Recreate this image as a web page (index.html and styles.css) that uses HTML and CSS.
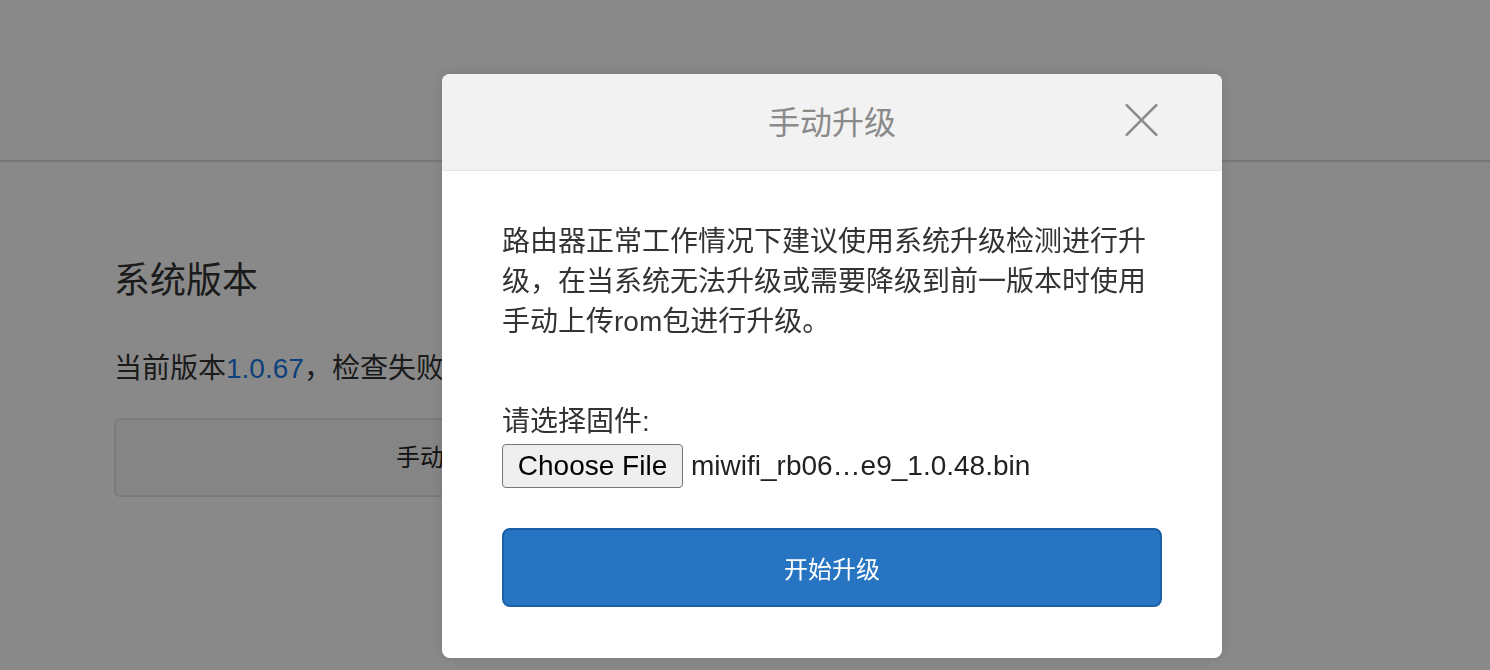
FILE: index.html
```html
<!DOCTYPE html>
<html lang="zh-CN">
<head>
<meta charset="utf-8">
<title>手动升级</title>
<link rel="stylesheet" href="styles.css">
</head>
<body>
<div class="page">
  <header class="topbar"></header>
  <main class="content">
    <h2 class="section-title">系统版本</h2>
    <p class="version">当前版本<span class="ver-num">1.0.67</span>，检查失败</p>
    <div class="bg-btn">手动升级</div>
  </main>
</div>

<div class="overlay">
  <div class="modal">
    <div class="modal-head">
      <div class="modal-title">手动升级</div>
      <button class="close" aria-label="关闭">
        <svg width="36" height="36" viewBox="0 0 36 36"><path d="M2 2L34 34M34 2L2 34" stroke="#8a8a8a" stroke-width="2.6" fill="none"/></svg>
      </button>
    </div>
    <div class="modal-body">
      <p class="desc">路由器正常工作情况下建议使用系统升级检测进行升级，在当系统无法升级或需要降级到前一版本时使用手动上传rom包进行升级。</p>
      <div class="label">请选择固件:</div>
      <div class="file-row">
        <span class="file-btn">Choose File</span>
        <span class="file-name">miwifi_rb06…e9_1.0.48.bin</span>
      </div>
      <button class="start">开始升级</button>
    </div>
  </div>
</div>
</body>
</html>
```

FILE: styles.css
```css
* { box-sizing: border-box; }
html, body { margin: 0; padding: 0; }
body {
  width: 1490px;
  height: 670px;
  overflow: hidden;
  background: #fff;
  font-family: "Liberation Sans", "Noto Sans CJK SC", sans-serif;
  color: #333;
}
.topbar {
  height: 162px;
  border-bottom: 2px solid #dedede;
}
.content {
  padding: 0 0 0 114px;
}
.section-title {
  margin: 94px 0 0;
  font-size: 36px;
  line-height: 50px;
  font-weight: normal;
  color: #333;
}
.version {
  margin: 43px 0 0;
  font-size: 28px;
  line-height: 40px;
  color: #333;
}
.ver-num { color: #1a7ae6; }
.bg-btn {
  margin-top: 29px;
  width: 676px;
  height: 79px;
  border: 2px solid #e3e3e3;
  border-radius: 6px;
  background: #f8f8f8;
  font-size: 24px;
  line-height: 75px;
  padding-left: 280px;
  color: #222;
}
.overlay {
  position: fixed;
  inset: 0;
  background: rgba(0, 0, 0, 0.463);
  padding: 74px 0 0 442px;
}
.modal {
  width: 780px;
  height: 584px;
  background: #fff;
  border-radius: 8px;
  overflow: hidden;
  box-shadow: 0 0 14px rgba(0, 0, 0, 0.12);
}
.modal-head {
  position: relative;
  height: 97px;
  background: #f2f2f2;
  border-bottom: 1px solid #e4e4e4;
  display: flex;
  align-items: center;
  justify-content: center;
}
.modal-title {
  font-size: 32px;
  color: #8a8a8a;
  line-height: 40px;
  margin-top: 2px;
}
.close {
  position: absolute;
  right: 63px;
  top: 28px;
  width: 35px;
  height: 36px;
  padding: 0;
  border: 0;
  background: none;
  display: flex;
}
.modal-body {
  padding: 51px 60px 51px;
}
.desc {
  margin: 0;
  font-size: 28px;
  line-height: 40px;
  color: #333;
}
.label {
  margin-top: 60px;
  font-size: 28px;
  line-height: 40px;
  color: #333;
}
.file-row {
  margin-top: 2px;
  height: 44px;
  display: flex;
  align-items: center;
}
.file-btn {
  width: 181px;
  height: 44px;
  border: 1px solid #767676;
  border-radius: 4px;
  background: #efefef;
  font-family: "Liberation Sans", sans-serif;
  font-size: 28px;
  line-height: 42px;
  text-align: center;
  color: #000;
}
.file-name {
  margin-left: 8px;
  font-family: "Liberation Sans", sans-serif;
  font-size: 28px;
  color: #222;
}
.start {
  display: block;
  margin-top: 40px;
  width: 100%;
  height: 79px;
  background: #2775c2;
  border: 2px solid #1a5ea8;
  border-radius: 8px;
  color: #fff;
  font-family: "Noto Sans CJK SC", sans-serif;
  font-size: 24px;
  padding: 0;
}
```
